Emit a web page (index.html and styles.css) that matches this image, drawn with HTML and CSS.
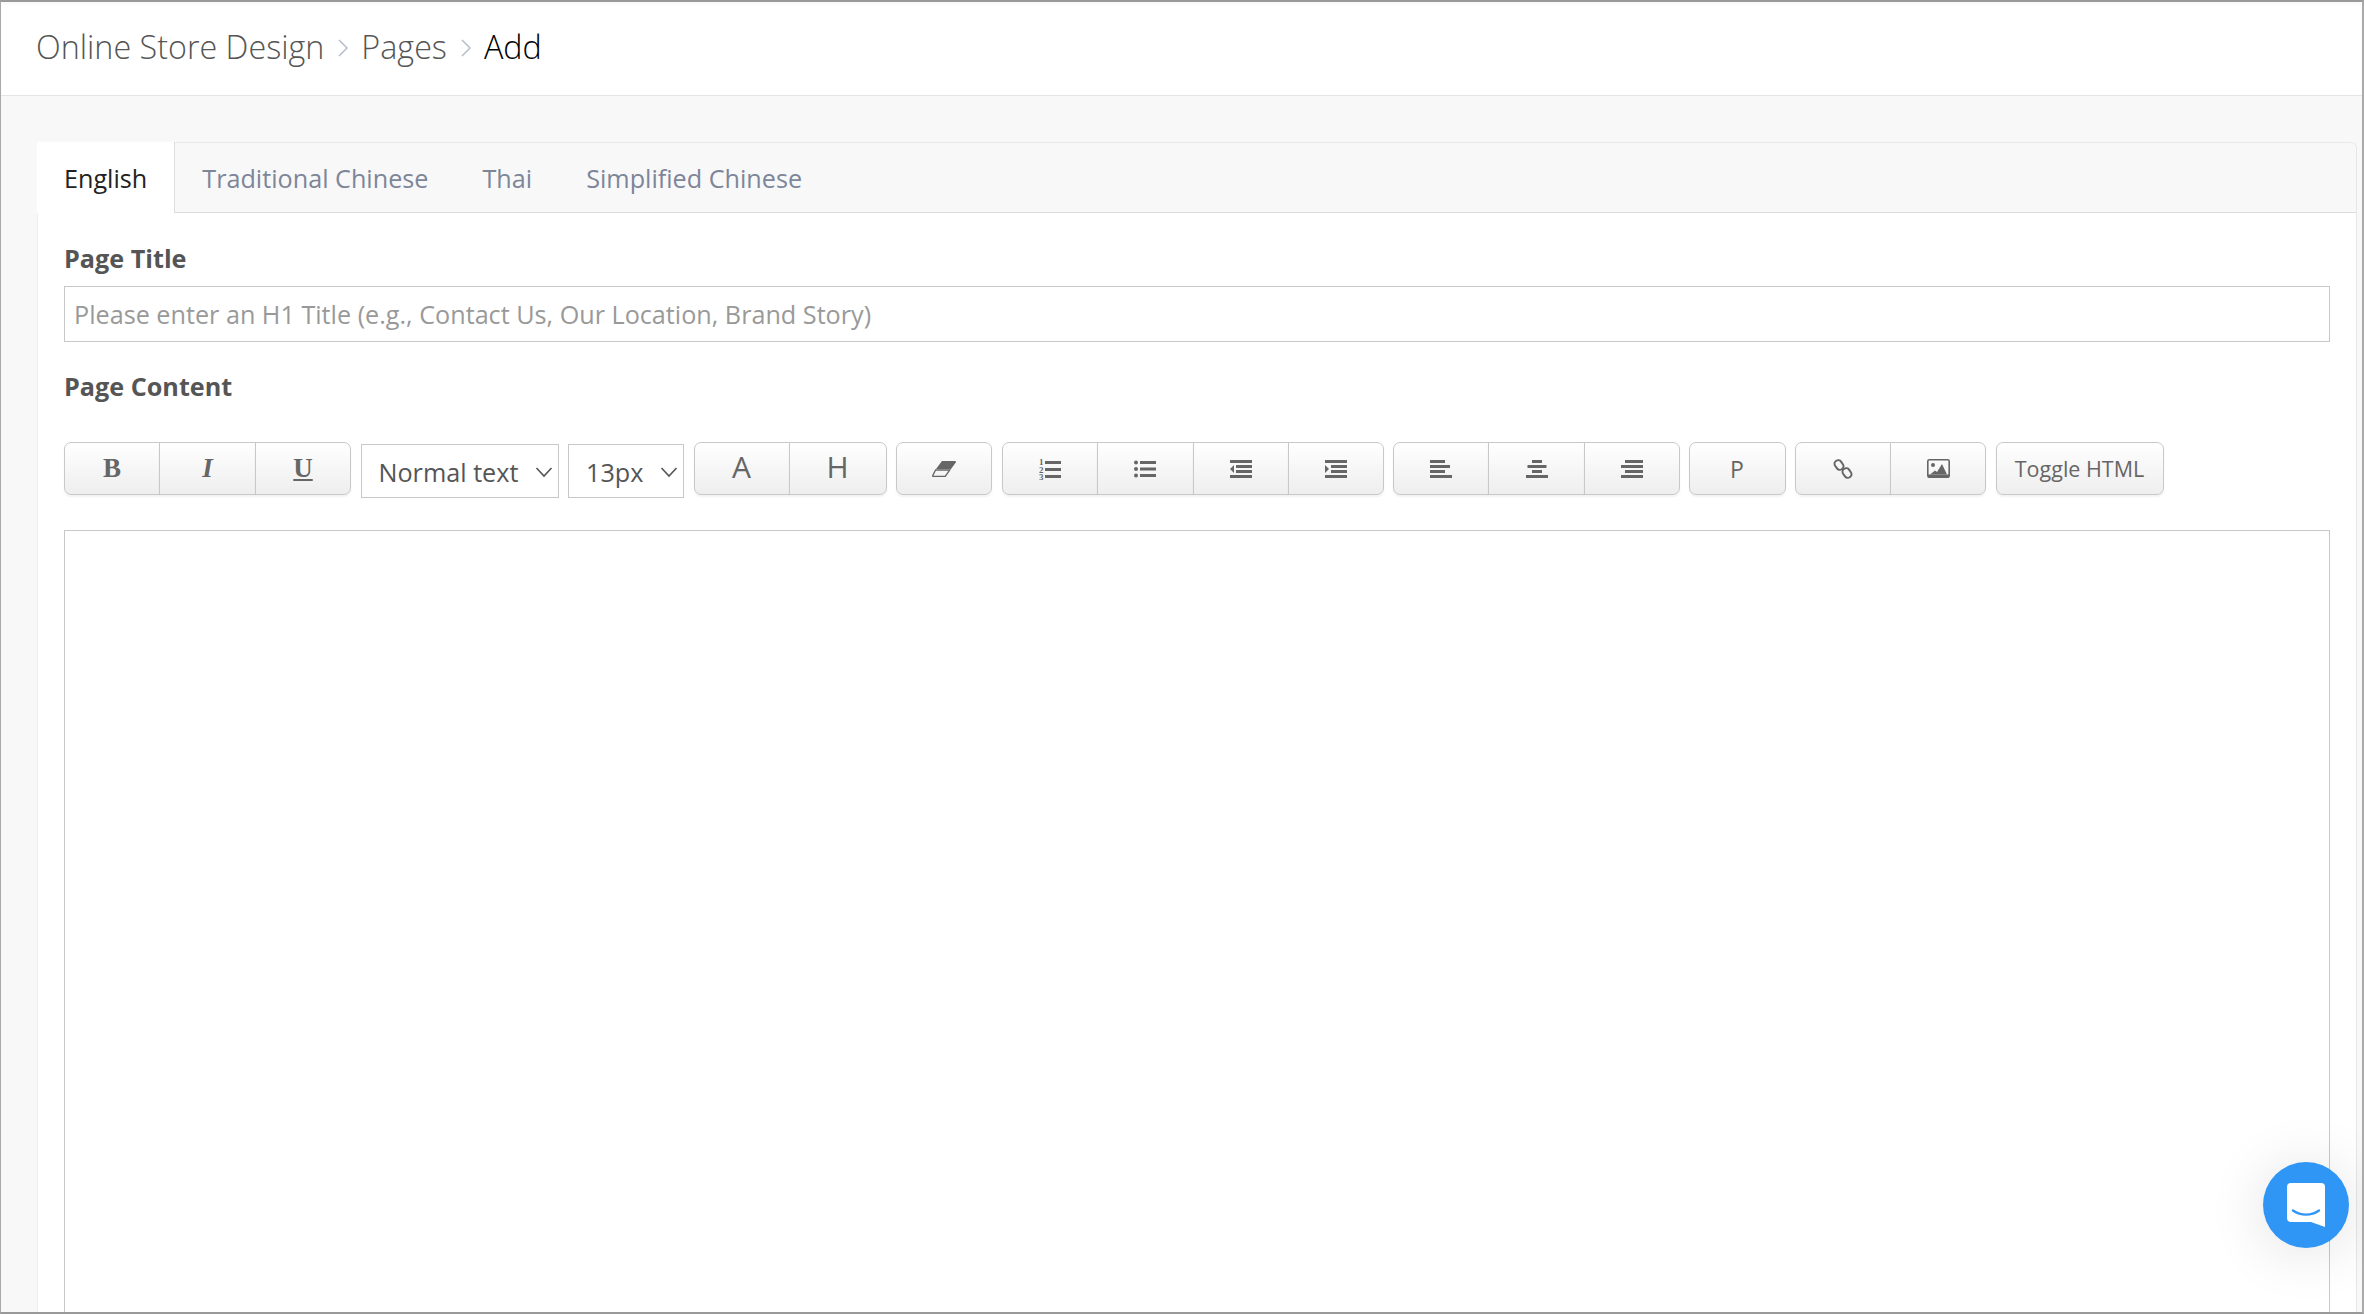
FILE: index.html
```html
<!DOCTYPE html>
<html lang="en">
<head>
<meta charset="utf-8">
<title>Add Page</title>
<link rel="stylesheet" href="styles.css">
</head>
<body>
<div class="frame">
  <header class="crumbs">
    <span class="crumb">Online Store Design</span>
    <svg class="sep" viewBox="0 0 12 20"><path d="M2 2l8 8-8 8"/></svg>
    <span class="crumb">Pages</span>
    <svg class="sep" viewBox="0 0 12 20"><path d="M2 2l8 8-8 8"/></svg>
    <span class="crumb current">Add</span>
  </header>
  <main class="main">
    <section class="panel">
      <nav class="tabs">
        <a class="tab active">English</a>
        <a class="tab">Traditional Chinese</a>
        <a class="tab">Thai</a>
        <a class="tab">Simplified Chinese</a>
      </nav>
      <div class="body">
        <label class="label">Page Title</label>
        <input class="title-input" type="text" placeholder="Please enter an H1 Title (e.g., Contact Us, Our Location, Brand Story)">
        <label class="label content-label">Page Content</label>
        <div class="toolbar">
          <div class="group">
            <button class="btn serif bold">B</button>
            <button class="btn serif italic bold w97">I</button>
            <button class="btn serif underline">U</button>
          </div>
          <div class="select sel-format"><span>Normal text</span><svg class="chev" viewBox="0 0 18 12"><path d="M1.5 2l7.5 8 7.5-8"/></svg></div>
          <div class="select sel-size"><span>13px</span><svg class="chev" viewBox="0 0 18 12"><path d="M1.5 2l7.5 8 7.5-8"/></svg></div>
          <div class="group">
            <button class="btn big">A</button>
            <button class="btn big w98">H</button>
          </div>
          <div class="group">
            <button class="btn" aria-label="Eraser">
              <svg class="ic" width="24" height="16" viewBox="0 0 24 16"><path d="M10 0h13a1 1 0 0 1 .8 1.6L19 8H4z" fill="#666"/><path d="M3.6 9h14.2l-4.6 6.5H1.2a.6.6 0 0 1-.5-.9z" fill="none" stroke="#666" stroke-width="1.3"/></svg>
            </button>
          </div>
          <div class="group">
            <button class="btn" aria-label="Ordered list">
              <svg class="ic" width="22" height="22" viewBox="0 0 22 22"><g fill="#666"><rect x="6" y="3" width="16" height="3"/><rect x="6" y="10" width="16" height="3"/><rect x="6" y="17" width="16" height="3"/><text x="0" y="7" class="nums">1</text><text x="0" y="14.500" class="nums">2</text><text x="0" y="22" class="nums">3</text></g></svg>
            </button>
            <button class="btn w97" aria-label="Bullet list">
              <svg class="ic" width="22" height="18" viewBox="0 0 22 18"><g fill="#666"><circle cx="2" cy="2.500" r="2"/><circle cx="2" cy="9" r="2"/><circle cx="2" cy="15.500" r="2"/><rect x="6" y="1" width="16" height="3"/><rect x="6" y="7.500" width="16" height="3"/><rect x="6" y="14" width="16" height="3"/></g></svg>
            </button>
            <button class="btn" aria-label="Outdent">
              <svg class="ic" width="22" height="18" viewBox="0 0 22 18"><g fill="#666"><rect width="22" height="3"/><rect y="15" width="22" height="3"/><rect x="6" y="5" width="16" height="3"/><rect x="6" y="10" width="16" height="3"/><path d="M4 5v8L0 9z"/></g></svg>
            </button>
            <button class="btn" aria-label="Indent">
              <svg class="ic" width="22" height="18" viewBox="0 0 22 18"><g fill="#666"><rect width="22" height="3"/><rect y="15" width="22" height="3"/><rect x="6" y="5" width="16" height="3"/><rect x="6" y="10" width="16" height="3"/><path d="M0 5v8l4-4z"/></g></svg>
            </button>
          </div>
          <div class="group">
            <button class="btn" aria-label="Align left">
              <svg class="ic" width="22" height="18" viewBox="0 0 22 18"><g fill="#666"><rect width="15" height="3"/><rect y="5" width="20" height="3"/><rect y="10" width="15" height="3"/><rect y="15" width="22" height="3"/></g></svg>
            </button>
            <button class="btn w97" aria-label="Align center">
              <svg class="ic" width="22" height="18" viewBox="0 0 22 18"><g fill="#666"><rect x="6" width="10" height="3"/><rect x="1.500" y="5" width="19" height="3"/><rect x="6" y="10" width="10" height="3"/><rect y="15" width="22" height="3"/></g></svg>
            </button>
            <button class="btn" aria-label="Align right">
              <svg class="ic" width="22" height="18" viewBox="0 0 22 18"><g fill="#666"><rect x="4" width="18" height="3"/><rect y="5" width="22" height="3"/><rect x="4" y="10" width="18" height="3"/><rect y="15" width="22" height="3"/></g></svg>
            </button>
          </div>
          <div class="group p-group">
            <button class="btn p-btn">P</button>
          </div>
          <div class="group">
            <button class="btn" aria-label="Link">
              <svg class="ic" width="20" height="20" viewBox="0 0 20 20"><g fill="none" stroke="#666" stroke-width="2"><rect x="-3.600" y="-5" width="7.200" height="10" rx="3.400" transform="translate(6 6) rotate(-35)"/><rect x="-3.600" y="-5" width="7.200" height="10" rx="3.400" transform="translate(14 14) rotate(-35)"/></g></svg>
            </button>
            <button class="btn" aria-label="Image">
              <svg class="ic" width="23" height="19" viewBox="0 0 23 19"><rect x=".8" y=".8" width="21.400" height="17.400" rx="1.500" fill="none" stroke="#666" stroke-width="1.600"/><rect x="1" y="15.500" width="21" height="3" fill="#666"/><circle cx="6" cy="6" r="2" fill="#666"/><path d="M3 15.500l5-4 2 1.500 5-8 5 10.500z" fill="#666"/></svg>
            </button>
          </div>
          <div class="group">
            <button class="btn toggle">Toggle HTML</button>
          </div>
        </div>
        <div class="editor"></div>
      </div>
    </section>
  </main>
  <button class="chat" aria-label="Chat">
    <svg width="38" height="44" viewBox="0 0 38 44"><path d="M4 0h30a4 4 0 0 1 4 4v40l-14-5H4a4 4 0 0 1-4-4V4a4 4 0 0 1 4-4z" fill="#fff"/><path d="M6 27.500c8 5.500 18 5.500 26 0" fill="none" stroke="#3096f5" stroke-width="2.400" stroke-linecap="round"/></svg>
  </button>
</div>
</body>
</html>
```

FILE: styles.css
```css
* { box-sizing: border-box; }
html, body { margin: 0; padding: 0; height: 100%; background: #fff; }
body { overflow: hidden; font-family: "Open Sans", "Noto Sans", sans-serif; }

.frame {
  position: relative;
  height: 1314px;
  display: flex;
  flex-direction: column;
  overflow: hidden;
  background: #f8f8f8;
  border-top: 2px solid #999;
  border-left: 1px solid #aaa;
  border-right: 2px solid #aaa;
  border-bottom: 2px solid #999;
}

.crumbs {
  flex: none;
  height: 94px;
  padding: 0 0 6px 35px;
  display: flex;
  align-items: center;
  background: #fff;
  border-bottom: 1px solid #e6e6e6;
  box-shadow: inset 0 3px 3px rgba(0, 0, 0, .025);
  font-size: 32.300px;
  font-weight: 300;
  color: #555;
}
.crumb.current { color: #000; }
.sep { width: 12px; height: 22px; margin: 4px 12px 0 13px; fill: none; stroke: #b5bccb; stroke-width: 1.5; }

.main { flex: 1; min-height: 0; padding: 46px 5px 0 36px; }

.panel {
  height: 100%;
  background: #fff;
  border-right: 1px solid #e6e6e6;
  border-left: 1px solid #eee;
  border-top-right-radius: 6px;
}

.tabs {
  height: 71px;
  display: flex;
  background: #f8f8f8;
  border-top: 1px solid #e8e8e8;
  border-bottom: 1px solid #ddd;
  border-top-right-radius: 6px;
}
.tab {
  padding: 0 27px;
  line-height: 71px;
  font-size: 25.200px;
  color: #7d8699;
}
.tab.active {
  margin: -1px 0 -1px -1px;
  padding: 1px 27px;
  height: 71px;
  background: #fff;
  color: #222;
  border-right: 1px solid #ddd;
}

.body { padding: 27px 26px 0 26px; }

.label {
  display: block;
  height: 32px;
  line-height: 37px;
  font-size: 25.200px;
  font-weight: 700;
  color: #555;
}

.title-input {
  display: block;
  width: 100%;
  height: 56px;
  margin-top: 14px;
  padding: 0 9px;
  font: 400 25.200px/36px "Open Sans", sans-serif;
  color: #555;
  background: #fff;
  border: 1px solid #c8c8c8;
  outline: none;
}
.title-input::placeholder { color: #999; opacity: 1; }

.content-label { margin-top: 26px; }

.toolbar {
  display: flex;
  align-items: flex-start;
  gap: 9.500px;
  margin-top: 42px;
}
.group { display: flex; flex: none; }
.p-group { margin-left: -1px; }

.btn {
  flex: none;
  display: flex;
  align-items: center;
  justify-content: center;
  width: 96px;
  height: 53px;
  padding: 0;
  margin-left: -1px;
  font: 400 22px "Open Sans", sans-serif;
  color: #666;
  background: linear-gradient(#fff, #eee);
  border: 1px solid #c8c8c8;
  box-shadow: 0 2px 2px rgba(0, 0, 0, .05);
}
.btn:first-child { margin-left: 0; border-radius: 7px 0 0 7px; }
.btn:last-child { border-radius: 0 7px 7px 0; }
.btn:only-child { border-radius: 7px; }
.w97 { width: 97px; }
.w98 { width: 98px; }
.serif { font-family: "Liberation Serif", serif; font-size: 27px; }
.bold { font-weight: 700; }
.italic { font-style: italic; }
.underline { text-decoration: underline; font-weight: 700; }
.big { font-size: 30px; padding-bottom: 4px; }
.p-btn { width: 97px; font-size: 23px; }
.toggle { width: 168px; font-size: 21.500px; }
.ic { display: block; }
.nums { font: 700 9px "Liberation Serif", serif; }

.select {
  flex: none;
  display: flex;
  align-items: center;
  justify-content: space-between;
  height: 54px;
  margin-top: 2px;
  padding: 1px 5px 0 17px;
  font-size: 25.200px;
  color: #555;
  background: #fff;
  border: 1px solid #c8c8c8;
}
.sel-format { width: 198px; }
.sel-size { width: 116px; }
.chev { width: 18px; height: 12px; fill: none; stroke: #555; stroke-width: 1.6; }

.editor {
  height: 900px;
  margin-top: 32px;
  background: #fff;
  border: 1px solid #c8c8c8;
}

.chat {
  position: absolute;
  right: 13px;
  bottom: 64px;
  width: 86px;
  height: 86px;
  display: flex;
  align-items: center;
  justify-content: center;
  padding: 0 0 1px 0;
  background: #3096f5;
  border: 0;
  border-radius: 50%;
  box-shadow: 0 4px 60px rgba(0, 0, 0, .12);
}
```
